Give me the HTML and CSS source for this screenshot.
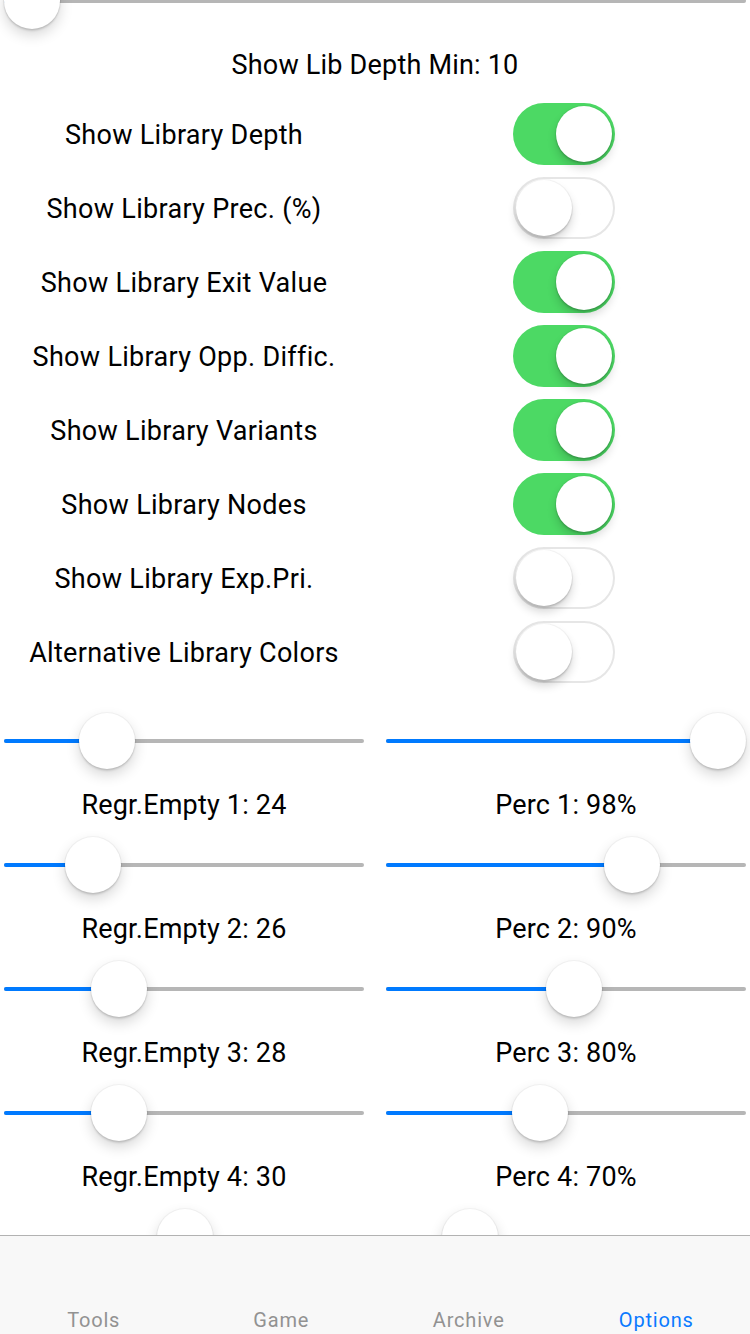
FILE: index.html
```html
<!DOCTYPE html>
<html lang="en">
<head>
    <meta charset="UTF-8">
    <meta name="viewport" content="width=device-width, initial-scale=1.0">
    <title>Options</title>
    <link rel="stylesheet" href="styles.css">
</head>
<body>
    <main class="content">
        <section class="depth">
            <div class="slider" style="--v:0">
                <div class="track"><div class="fill"></div></div>
                <div class="thumb"></div>
            </div>
            <p class="caption">Show Lib Depth Min: 10</p>
        </section>

        <section class="toggles">
            <div class="toggle-row">
                <span class="label">Show Library Depth</span>
                <span class="switch on"><span class="knob"></span></span>
            </div>
            <div class="toggle-row">
                <span class="label">Show Library Prec. (%)</span>
                <span class="switch"><span class="knob"></span></span>
            </div>
            <div class="toggle-row">
                <span class="label">Show Library Exit Value</span>
                <span class="switch on"><span class="knob"></span></span>
            </div>
            <div class="toggle-row">
                <span class="label">Show Library Opp. Diffic.</span>
                <span class="switch on"><span class="knob"></span></span>
            </div>
            <div class="toggle-row">
                <span class="label">Show Library Variants</span>
                <span class="switch on"><span class="knob"></span></span>
            </div>
            <div class="toggle-row">
                <span class="label">Show Library Nodes</span>
                <span class="switch on"><span class="knob"></span></span>
            </div>
            <div class="toggle-row">
                <span class="label">Show Library Exp.Pri.</span>
                <span class="switch"><span class="knob"></span></span>
            </div>
            <div class="toggle-row">
                <span class="label">Alternative Library Colors</span>
                <span class="switch"><span class="knob"></span></span>
            </div>
        </section>

        <section class="pairs">
            <div class="cell">
                <div class="slider" style="--v:0.247">
                    <div class="track"><div class="fill"></div></div>
                    <div class="thumb"></div>
                </div>
                <p class="caption">Regr.Empty 1: 24</p>
            </div>
            <div class="cell">
                <div class="slider" style="--v:1">
                    <div class="track"><div class="fill"></div></div>
                    <div class="thumb"></div>
                </div>
                <p class="caption">Perc 1: 98%</p>
            </div>
            <div class="cell">
                <div class="slider" style="--v:0.201">
                    <div class="track"><div class="fill"></div></div>
                    <div class="thumb"></div>
                </div>
                <p class="caption">Regr.Empty 2: 26</p>
            </div>
            <div class="cell">
                <div class="slider" style="--v:0.717">
                    <div class="track"><div class="fill"></div></div>
                    <div class="thumb"></div>
                </div>
                <p class="caption">Perc 2: 90%</p>
            </div>
            <div class="cell">
                <div class="slider" style="--v:0.286">
                    <div class="track"><div class="fill"></div></div>
                    <div class="thumb"></div>
                </div>
                <p class="caption">Regr.Empty 3: 28</p>
            </div>
            <div class="cell">
                <div class="slider" style="--v:0.526">
                    <div class="track"><div class="fill"></div></div>
                    <div class="thumb"></div>
                </div>
                <p class="caption">Perc 3: 80%</p>
            </div>
            <div class="cell">
                <div class="slider" style="--v:0.286">
                    <div class="track"><div class="fill"></div></div>
                    <div class="thumb"></div>
                </div>
                <p class="caption">Regr.Empty 4: 30</p>
            </div>
            <div class="cell">
                <div class="slider" style="--v:0.414">
                    <div class="track"><div class="fill"></div></div>
                    <div class="thumb"></div>
                </div>
                <p class="caption">Perc 4: 70%</p>
            </div>
            <!-- fifth pair sits behind the tab bar, only the thumbs peek out -->
            <div class="cell">
                <div class="slider" style="--v:0.503">
                    <div class="track"><div class="fill"></div></div>
                    <div class="thumb"></div>
                </div>
            </div>
            <div class="cell">
                <div class="slider" style="--v:0.184">
                    <div class="track"><div class="fill"></div></div>
                    <div class="thumb"></div>
                </div>
            </div>
        </section>
    </main>

    <nav class="tabbar">
        <a href="#" class="tab">Tools</a>
        <a href="#" class="tab">Game</a>
        <a href="#" class="tab">Archive</a>
        <a href="#" class="tab active">Options</a>
    </nav>
</body>
</html>
```

FILE: styles.css
```css
body {
    margin: 0;
    padding: 0;
    background: #fff;
    color: #000;
    font-family: Roboto, 'Liberation Sans', Arial, sans-serif;
    overflow: hidden;
    height: 1334px;
}
.content {
    padding: 0 4px;
}
.caption {
    margin: 21px 0 0;
    height: 29px;
    line-height: 30px;
    font-size: 27px;
    letter-spacing: 0.2px;
    text-align: center;
}

/* sliders */
.slider {
    position: relative;
    height: 56px;
}
.track {
    position: absolute;
    left: 0;
    right: 0;
    top: 26px;
    height: 4px;
    border-radius: 2px;
    background: #b6b6b6;
    overflow: hidden;
}
.fill {
    height: 100%;
    width: calc(28px + (100% - 56px) * var(--v));
    background: #007aff;
}
.thumb {
    position: absolute;
    top: 0;
    left: calc((100% - 56px) * var(--v));
    width: 56px;
    height: 56px;
    border-radius: 50%;
    background: #fff;
    box-shadow: 0 0 0 1px rgba(0, 0, 0, 0.04), 0 6px 14px rgba(0, 0, 0, 0.16), 0 2px 2px rgba(0, 0, 0, 0.12);
}
.depth {
    margin-top: -27px;
}

/* toggles */
.toggles {
    margin-top: 18px;
}
.toggle-row {
    display: grid;
    grid-template-columns: 360px 360px;
    column-gap: 22px;
    align-items: center;
    height: 74px;
}
.label {
    padding-top: 2px;
    text-align: center;
    font-size: 27px;
    letter-spacing: 0.3px;
}
.switch {
    justify-self: center;
    margin-right: 5px;
    position: relative;
    width: 102px;
    height: 62px;
    border-radius: 31px;
    background: #fff;
    box-shadow: inset 0 0 0 2px #e6e6e6;
}
.switch.on {
    background: #4cd964;
    box-shadow: none;
}
.knob {
    position: absolute;
    top: 3px;
    left: 3px;
    width: 56px;
    height: 56px;
    border-radius: 50%;
    background: #fff;
    box-shadow: 0 0 0 1px rgba(0, 0, 0, 0.04), 0 6px 10px rgba(0, 0, 0, 0.16), 0 2px 2px rgba(0, 0, 0, 0.14);
}
.switch.on .knob {
    left: auto;
    right: 3px;
}

/* paired sliders */
.pairs {
    margin-top: 24px;
    display: grid;
    grid-template-columns: 360px 360px;
    column-gap: 22px;
    row-gap: 18px;
}

/* tab bar */
.tabbar {
    position: fixed;
    left: 0;
    right: 0;
    bottom: 0;
    height: 98px;
    display: flex;
    align-items: flex-end;
    background: #f8f8f8;
    border-top: 1px solid #b2b2b2;
}
.tab {
    flex: 1;
    text-align: center;
    font-size: 20px;
    letter-spacing: 0.8px;
    line-height: 28px;
    color: #929292;
    text-decoration: none;
}
.tab.active {
    color: #0a7aff;
}
```
